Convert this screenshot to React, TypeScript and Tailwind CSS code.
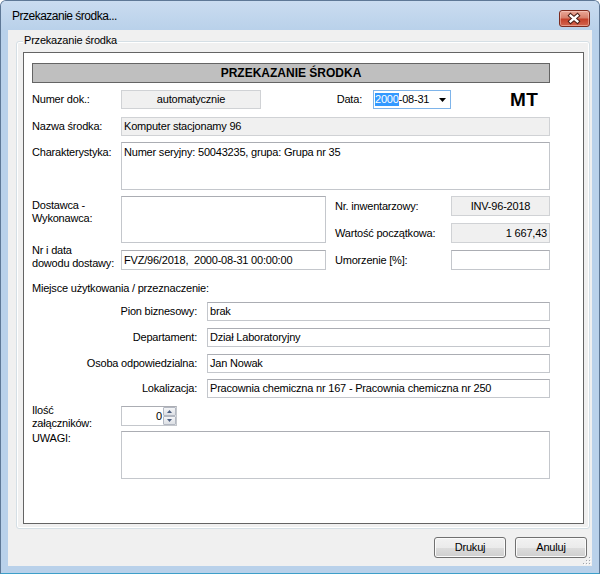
import React from "react";

const TB = "border border-[#c4c7cc] border-t-[#abadb3] bg-white";
const GB = "border border-[#d0d2d5] bg-[#f0f0f0]";

function Btn({ children }: { children: React.ReactNode }) {
  return (
    <div className="w-[72px] h-[21px] rounded-[3px] border border-[#707070] bg-[linear-gradient(#f2f2f2,#ebebeb_50%,#dddddd_51%,#cfcfcf)] shadow-[inset_0_0_0_1px_#fbfbfb] flex items-center justify-center">
      {children}
    </div>
  );
}

function Row19({ label, value }: { label: string; value: string }) {
  return (
    <div className="h-[19px] flex items-center">
      <div className="w-[175px] text-right pr-[10px]">{label}</div>
      <div className={TB + " w-[343px] h-[19px] pl-[2px] flex items-center"}>{value}</div>
    </div>
  );
}

export default function App() {
  return (
    <div className="w-[600px] h-[574px] flex flex-col border border-[#5e7896] border-b-[#3d9fc9] rounded-t-[6px] bg-[#b9d1ea] font-['Liberation_Sans',Arial,sans-serif] text-[11px] leading-[13px] tracking-[-0.2px] text-black overflow-hidden">
      {/* Title bar */}
      <div className="h-[29px] flex items-start bg-gradient-to-b from-[#cadcf0] to-[#b9d1ea]">
        <div className="ml-[11px] mt-[8px] text-[12px] leading-[14px] tracking-[-0.5px]">Przekazanie środka...</div>
        <div className="ml-auto mr-[9px] mt-[9px] w-[31px] h-[17px] rounded-[3px] border border-[#7c2b1f] bg-[linear-gradient(#eaa898,#d7806c_45%,#c4412b_55%,#d3664f)] shadow-[inset_0_0_0_1px_rgba(255,220,210,0.45)] flex items-center justify-center">
          <svg width="29" height="15" viewBox="0 0 29 15">
            <g strokeLinecap="square">
              <path d="M10.6 4.6 L17.4 10.4 M17.4 4.6 L10.6 10.4" stroke="#4a1f18" strokeWidth="4.4" fill="none" />
              <path d="M10.6 4.6 L17.4 10.4 M17.4 4.6 L10.6 10.4" stroke="#ffffff" strokeWidth="2.4" fill="none" />
            </g>
          </svg>
        </div>
      </div>

      {/* Client area */}
      <div className="mx-[7px] w-[584px] h-[536px] bg-[#f0f0f0] flex flex-col relative">
        {/* Group box */}
        <div className="mt-[11px] ml-[8px] w-[574px] h-[488px] border border-[#d5dfe5] rounded-[3px] shadow-[inset_0_0_0_1px_#ffffff] relative">
          <div className="absolute -top-[8px] left-[6px] px-[1px] bg-[#f0f0f0]">Przekazanie środka</div>

          {/* Inner panel */}
          <div className="mt-[10px] ml-[6px] w-[561px] h-[472px] border border-[#646464] bg-white flex flex-col pl-[8px]">
            <div className="mt-[10px] w-[518px] h-[20px] border border-[#646464] bg-[#bfbfbf] flex items-center justify-center font-bold text-[12px] tracking-normal">
              PRZEKAZANIE ŚRODKA
            </div>

            {/* Numer dok / Data / MT */}
            <div className="mt-[7px] h-[19px] flex items-center">
              <div className="w-[89px]">Numer dok.:</div>
              <div className={GB + " w-[140px] h-[19px] flex items-center justify-center"}>automatycznie</div>
              <div className="w-[101px] text-right">Data:</div>
              <div className="ml-[11px] w-[78px] h-[19px] border border-[#7eb4ea] bg-white flex items-center pl-[1px]">
                <span className="bg-[#3399ff] text-white">2000</span>
                <span>-08-31</span>
                <svg className="ml-auto mr-[4px]" width="7" height="4" viewBox="0 0 7 4">
                  <path d="M0 0 H7 L3.5 4 Z" fill="#000" />
                </svg>
              </div>
              <div className="ml-[59px] text-[19px] leading-none font-bold tracking-[0.5px]">MT</div>
            </div>

            {/* Nazwa */}
            <div className="mt-[8px] h-[19px] flex items-center">
              <div className="w-[89px]">Nazwa środka:</div>
              <div className={GB + " w-[429px] h-[19px] pl-[2px] flex items-center"}>Komputer stacjonamy 96</div>
            </div>

            {/* Charakterystyka */}
            <div className="mt-[6px] flex items-start">
              <div className="w-[89px] pt-[4px]">Charakterystyka:</div>
              <div className={TB + " w-[429px] h-[48px] pl-[2px] pt-[3px]"}>Numer seryjny: 50043235, grupa: Grupa nr 35</div>
            </div>

            {/* Dostawca + right column */}
            <div className="mt-[6px] flex items-start">
              <div className="w-[89px] pt-[3px]">
                Dostawca -<br />
                Wykonawca:
              </div>
              <div className={TB + " w-[205px] h-[47px]"}></div>
              <div className="ml-[9px] flex flex-col gap-[7px]">
                <div className="h-[20px] flex items-center">
                  <div className="w-[116px]">Nr. inwentarzowy:</div>
                  <div className={GB + " w-[99px] h-[20px] flex items-center justify-center"}>INV-96-2018</div>
                </div>
                <div className="h-[20px] flex items-center">
                  <div className="w-[116px]">Wartość początkowa:</div>
                  <div className={GB + " w-[99px] h-[20px] flex items-center justify-end pr-[2px]"}>1 667,43</div>
                </div>
              </div>
            </div>

            {/* Nr i data dowodu dostawy */}
            <div className="mt-[1px] flex items-end">
              <div className="w-[89px]">
                Nr i data<br />
                dowodu dostawy:
              </div>
              <div className={TB + " w-[205px] h-[20px] pl-[2px] flex items-center whitespace-pre"}>FVZ/96/2018,  2000-08-31 00:00:00</div>
              <div className="ml-[9px] h-[20px] flex items-center">
                <div className="w-[116px]">Umorzenie [%]:</div>
                <div className={TB + " w-[99px] h-[20px]"}></div>
              </div>
            </div>

            <div className="mt-[12px]">Miejsce użytkowania / przeznaczenie:</div>

            <div className="mt-[7px]">
              <Row19 label="Pion biznesowy:" value="brak" />
            </div>
            <div className="mt-[7px]">
              <Row19 label="Departament:" value="Dział Laboratoryjny" />
            </div>
            <div className="mt-[7px]">
              <Row19 label="Osoba odpowiedzialna:" value="Jan Nowak" />
            </div>
            <div className="mt-[6px]">
              <Row19 label="Lokalizacja:" value="Pracownia chemiczna nr 167 - Pracownia chemiczna nr 250" />
            </div>

            {/* Ilość załączników */}
            <div className="mt-[6px] flex items-start">
              <div className="w-[89px]">
                Ilość<br />
                załączników:
              </div>
              <div className={TB + " mt-[2px] w-[56px] h-[20px] flex"}>
                <div className="flex-1 text-right pr-[1px] leading-[18px]">0</div>
                <div className="w-[13px] flex flex-col">
                  <div className="flex-1 border border-[#b3b8c2] rounded-[1px] bg-gradient-to-b from-[#f4f5f7] to-[#dde0e5] flex items-center justify-center">
                    <svg width="5" height="3" viewBox="0 0 5 3">
                      <path d="M0 3 H5 L2.5 0 Z" fill="#4c5e80" />
                    </svg>
                  </div>
                  <div className="flex-1 border border-[#b3b8c2] rounded-[1px] bg-gradient-to-b from-[#f4f5f7] to-[#dde0e5] flex items-center justify-center">
                    <svg width="5" height="3" viewBox="0 0 5 3">
                      <path d="M0 0 H5 L2.5 3 Z" fill="#4c5e80" />
                    </svg>
                  </div>
                </div>
              </div>
            </div>

            {/* Uwagi */}
            <div className="mt-[1px] flex items-start">
              <div className="w-[89px] pt-[1px]">UWAGI:</div>
              <div className={TB + " w-[429px] h-[48px]"}></div>
            </div>
          </div>
        </div>

        {/* Buttons */}
        <div className="mt-[8px] flex justify-end gap-[9px] pr-[5px]">
          <Btn>Drukuj</Btn>
          <Btn>Anuluj</Btn>
        </div>

        {/* Resize grip */}
        <svg className="absolute right-[1px] bottom-[1px]" width="10" height="10" viewBox="0 0 10 10">
          <g fill="#ffffff">
            <rect x="9" y="9" width="1" height="1" />
            <rect x="6" y="9" width="1" height="1" />
            <rect x="3" y="9" width="1" height="1" />
            <rect x="9" y="6" width="1" height="1" />
            <rect x="6" y="6" width="1" height="1" />
            <rect x="9" y="3" width="1" height="1" />
          </g>
          <g fill="#a0a4ab">
            <rect x="8" y="8" width="1" height="1" />
            <rect x="5" y="8" width="1" height="1" />
            <rect x="2" y="8" width="1" height="1" />
            <rect x="8" y="5" width="1" height="1" />
            <rect x="5" y="5" width="1" height="1" />
            <rect x="8" y="2" width="1" height="1" />
          </g>
        </svg>
      </div>
    </div>
  );
}
